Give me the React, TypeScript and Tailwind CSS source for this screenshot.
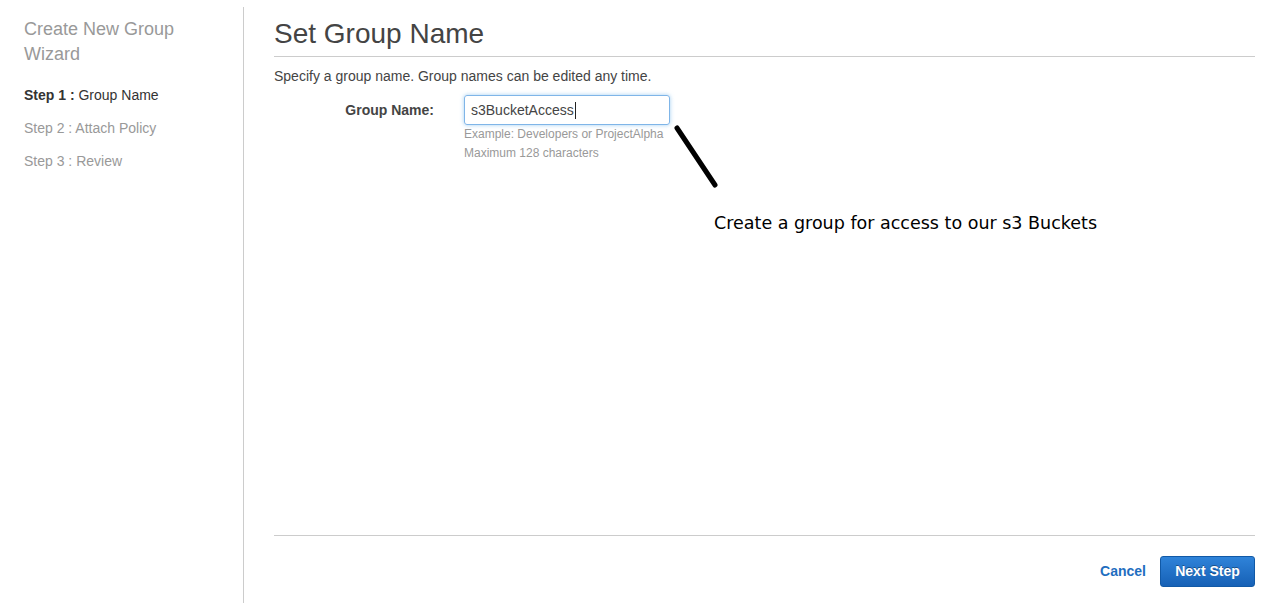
export default function App() {
  return (
    <div className="relative flex h-[603px] w-full bg-white font-['Liberation_Sans',Arial,sans-serif] text-[14px] text-[#444]">
      {/* wizard steps */}
      <aside className="mt-[7px] w-[244px] shrink-0 border-r border-[#ccc] pl-[24px] pt-[10px]">
        <h2 className="text-[18px] leading-[25px] text-[#999]">
          Create New Group
          <br />
          Wizard
        </h2>
        <ul className="mt-[12px]">
          <li className="leading-[33px] text-[#333]">
            <span className="font-bold">Step 1 :</span> Group Name
          </li>
          <li className="leading-[33px] text-[#999]">Step 2 : Attach Policy</li>
          <li className="leading-[33px] text-[#999]">Step 3 : Review</li>
        </ul>
      </aside>

      <main className="flex flex-1 flex-col pl-[30px] pr-[28px]">
        <div className="flex-1 pt-[18px]">
          <h1 className="border-b border-[#ccc] pb-[6px] text-[28px] leading-[32px] text-[#444]">Set Group Name</h1>
          <p className="mt-[9px] leading-[20px]">Specify a group name. Group names can be edited any time.</p>
          <div className="mt-[9px] flex">
            <label className="w-[190px] pr-[30px] text-right font-bold leading-[30px] text-[#444]">Group Name:</label>
            <div>
              <div className="flex h-[30px] w-[206px] items-center rounded-[3px] border border-[#7fb5e8] px-[6px] text-[14px] text-[#444] shadow-[0_0_4px_rgba(102,175,233,0.6)]">
                s3BucketAccess<span className="ml-px h-[17px] w-px bg-[#222]" />
              </div>
              <div className="text-[12px] leading-[19px] text-[#999]">
                <div>Example: Developers or ProjectAlpha</div>
                <div>Maximum 128 characters</div>
              </div>
            </div>
          </div>
        </div>

        <footer className="flex items-center justify-end gap-[14px] border-t border-[#ccc] pb-[16px] pt-[20px]">
          <button className="font-bold text-[#1f6ebf]">Cancel</button>
          <button className="h-[31px] w-[95px] rounded-[3px] border border-[#1159a6] bg-gradient-to-b from-[#2f83d9] to-[#1661b6] font-bold text-white [text-shadow:0_-1px_0_rgba(0,0,0,0.35)]">
            Next Step
          </button>
        </footer>
      </main>

      {/* annotation drawn over the screenshot */}
      <svg className="pointer-events-none absolute left-0 top-0" width="1283" height="603">
        <line x1="677" y1="128" x2="715" y2="185" stroke="#000" strokeWidth="5" strokeLinecap="round" />
      </svg>
      <div className="absolute left-[714px] top-[211px] font-['DejaVu_Sans',sans-serif] text-[17.5px] leading-[24px] text-black">
        Create a group for access to our s3 Buckets
      </div>
    </div>
  );
}
